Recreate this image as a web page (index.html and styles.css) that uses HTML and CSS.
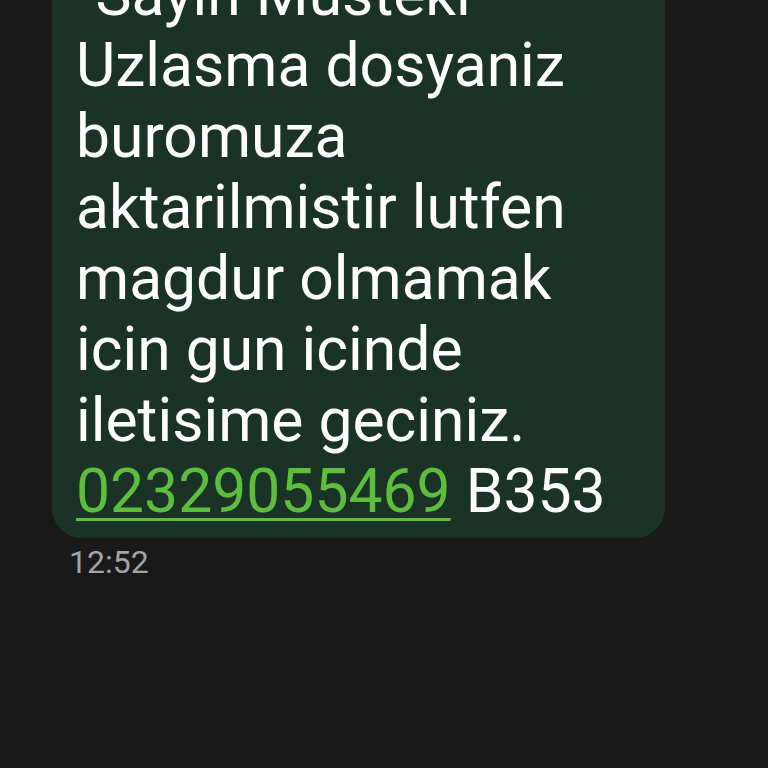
FILE: index.html
```html
<!DOCTYPE html>
<html>
	<head>
		<meta charset="UTF-8">
		<title>Mesaj</title>
		<link rel="stylesheet" href="styles.css">
	</head>
	<body>
		<div class="thread">
			<div class="bubble">
				<p class="text">"Sayin Musteki Uzlasma dosyaniz buromuza aktarilmistir lutfen magdur olmamak icin gun icinde iletisime geciniz. <a class="phone" href="#">02329055469</a> B353</p>
			</div>
			<div class="time">12:52</div>
		</div>
	</body>
</html>
```

FILE: styles.css
```css
html,body{
	margin:0;
	padding:0;
	height:100%;
	background-color:#191919;
	overflow:hidden;
}
body{
	font-family:Roboto, "Noto Sans", sans-serif;
}
.thread{
	margin-top:-60px;
	padding-left:52px;
}
.bubble{
	width:613px;
	box-sizing:border-box;
	padding:19px 22px 11px 24px;
	background-color:#1b3327;
	border-radius:30px;
}
.text{
	margin:0;
	color:#ffffff;
	font-size:60.6px;
	line-height:71px;
}
.phone{
	color:#5dbd3c;
	text-decoration:underline;
	text-decoration-thickness:3px;
	text-underline-offset:6px;
}
.time{
	margin-top:5px;
	padding-left:17px;
	color:#a3a3a3;
	font-size:32px;
}
```
